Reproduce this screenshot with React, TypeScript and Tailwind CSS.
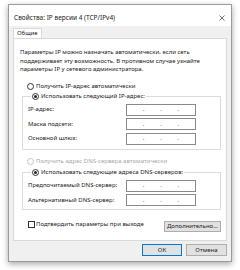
import React from 'react';

const font = { fontFamily: '"Noto Sans", "Open Sans", sans-serif' };

const Radio = ({ checked, disabled }: { checked?: boolean; disabled?: boolean }) => (
  <span
    className={`w-[7px] h-[7px] rounded-full border bg-white flex items-center justify-center shrink-0 ${
      disabled ? 'border-[#c4c4c4]' : 'border-[#333]'
    }`}
  >
    {checked && <span className="w-[3px] h-[3px] rounded-full bg-[#222]" />}
  </span>
);

const IpField = () => (
  <div className="w-[70px] h-[12px] border border-[#8a8a8a] bg-white flex items-center text-[6px] text-[#444] mr-[24px]">
    <span className="flex-1" />
    <span>.</span>
    <span className="flex-1" />
    <span>.</span>
    <span className="flex-1" />
    <span>.</span>
    <span className="flex-1" />
  </div>
);

const FieldRow = ({ label }: { label: string }) => (
  <div className="flex items-center h-[12px]">
    <span className="flex-1">{label}</span>
    <IpField />
  </div>
);

export default function App() {
  return (
    <div className="w-[240px] h-[270px] bg-white pt-[4px] pl-[8px] text-[6px] leading-[8.5px] text-[#1a1a1a]" style={font}>
      <div className="w-[224px] h-[258px] border border-[#9a9a9a] bg-[#f0f0f0] flex flex-col shadow-[0_2px_6px_rgba(0,0,0,0.35)]">
        {/* Title bar */}
        <div className="h-[21px] bg-white flex items-center justify-between pl-[5px] pr-[6px] pt-[6px]">
          <span className="text-[6.5px]">Свойства: IP версии 4 (TCP/IPv4)</span>
          <svg width="6" height="6" viewBox="0 0 6 6" className="mt-[-1px]">
            <path d="M0.5 0.5 L5.5 5.5 M5.5 0.5 L0.5 5.5" stroke="#333" strokeWidth="0.7" />
          </svg>
        </div>

        {/* Tabs */}
        <div className="pt-[2px] px-[4px] flex">
          <div className="h-[10px] bg-white border border-b-0 border-[#d9d9d9] px-[3px] flex items-center">
            Общие
          </div>
        </div>

        {/* Panel */}
        <div className="mx-[4px] h-[203px] bg-white border border-[#d9d9d9] pl-[6px] pr-[5px] pt-[9px] flex flex-col">
          <p className="mb-[8px]">
            Параметры IP можно назначать автоматически, если сеть поддерживает эту возможность. В противном случае узнайте
            параметры IP у сетевого администратора.
          </p>

          <div className="flex items-center gap-[2px] h-[10px] ml-[7px]">
            <Radio />
            <span>Получить IP-адрес автоматически</span>
          </div>

          <fieldset className="ml-[2px] border border-[#dcdcdc] pl-[5px] pb-[4px]">
            <legend className="ml-[3px] px-[1px] flex items-center gap-[2px] h-[10px]">
              <Radio checked />
              <span>Использовать следующий IP-адрес:</span>
            </legend>
            <div className="flex flex-col gap-[2.5px] pt-[2px]">
              <FieldRow label="IP-адрес:" />
              <FieldRow label="Маска подсети:" />
              <FieldRow label="Основной шлюз:" />
            </div>
          </fieldset>

          <div className="flex items-center gap-[2px] h-[10px] ml-[7px] mt-[7px] text-[#a8a8a8]">
            <Radio disabled />
            <span>Получить адрес DNS-сервера автоматически</span>
          </div>

          <fieldset className="ml-[2px] border border-[#dcdcdc] pl-[5px] pb-[3px] mt-[1px]">
            <legend className="ml-[3px] px-[1px] flex items-center gap-[2px] h-[10px]">
              <Radio checked />
              <span>Использовать следующие адреса DNS-серверов:</span>
            </legend>
            <div className="flex flex-col gap-[2.5px] pt-[2px]">
              <FieldRow label="Предпочитаемый DNS-сервер:" />
              <FieldRow label="Альтернативный DNS-сервер:" />
            </div>
          </fieldset>

          <div className="flex justify-between items-start mt-[11px] ml-[8px]">
            <div className="flex items-center gap-[1px] h-[8px] mt-[-1px]">
              <span className="w-[7px] h-[7px] border border-[#333] bg-white" />
              <span>Подтвердить параметры при выходе</span>
            </div>
            <div className="w-[57px] h-[11px] bg-[#e1e1e1] border border-[#adadad] flex items-center justify-center">
              Дополнительно...
            </div>
          </div>
        </div>

        {/* Buttons */}
        <div className="flex justify-end gap-[4px] pr-[4px] pt-[3px]">
          <div className="w-[40px] h-[12px] bg-[#e1e1e1] border border-[#0078d7] flex items-center justify-center">
            ОК
          </div>
          <div className="w-[41px] h-[12px] bg-[#e1e1e1] border border-[#adadad] flex items-center justify-center">
            Отмена
          </div>
        </div>
      </div>
    </div>
  );
}
